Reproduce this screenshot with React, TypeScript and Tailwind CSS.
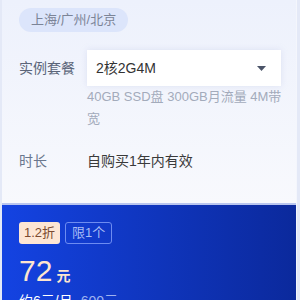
import { useState } from "react";

const plans = ["2核2G4M", "2核4G6M", "4核8G10M"];

export default function App() {
  const [plan] = useState(plans[0]);

  return (
    <div
      className="h-[300px] w-[300px] overflow-hidden bg-[#e4e9f7] pl-[2px] pr-[3px]"
      style={{ fontFamily: '"Liberation Sans", "Noto Sans CJK SC", sans-serif' }}
    >
      <div className="flex h-full flex-col border-r border-[#f4f6fc]">
        {/* config section */}
        <div className="flex h-[203px] shrink-0 flex-col bg-gradient-to-b from-[#edf1fc] to-[#f8f9fd] pl-[17px] pr-[15px] pt-[8px]">
          <div className="flex">
            <span className="rounded-full bg-[#dce5fb] px-[12px] text-[13px] leading-[24px] text-[#7b8497]">
              上海/广州/北京
            </span>
          </div>

          <div className="mt-[18px] flex items-center">
            <span className="w-[68px] text-[14px] text-[#5b6579]">实例套餐</span>
            <div className="flex h-[36px] flex-1 items-center justify-between bg-white pl-[9px] pr-[15px] shadow-[0_0_6px_rgba(180,190,225,0.35)]">
              <span className="text-[14px] text-[#333]">{plan}</span>
              <svg width="9" height="5" viewBox="0 0 9 5">
                <path d="M0 0h9L4.5 5z" fill="#4b5468" />
              </svg>
            </div>
          </div>

          <p className="ml-[68px] w-[200px] break-all text-[13px] leading-[22px] text-[#a3abbb]">
            40GB SSD盘 300GB月流量 4M带宽
          </p>

          <div className="mt-[21px] flex items-center leading-[20px]">
            <span className="w-[68px] text-[14px] text-[#6b778d]">时长</span>
            <span className="text-[14px] text-[#3a3a3a]">自购买1年内有效</span>
          </div>
        </div>

        {/* price section */}
        <div className="h-[2px] shrink-0 bg-[#b9c5ef]" />
        <div className="flex flex-1 flex-col bg-gradient-to-r from-[#1443e2] to-[#0b299c] pl-[17px] pt-[17px]">
          <div className="flex gap-[5px]">
            <span className="rounded-[3px] bg-[#fde6d4] px-[5px] text-[13px] leading-[22px] text-[#7b4a31]">
              1.2折
            </span>
            <span className="rounded-[3px] border border-[#6d8cf1] px-[6px] text-[13px] leading-[20px] text-[#a9bdf6]">
              限1个
            </span>
          </div>
          <div className="mt-[12px] flex items-baseline gap-[4px] text-[#fde5cf]">
            <span className="text-[30px] leading-[30px]">72</span>
            <span className="text-[14px] font-bold">元</span>
          </div>
          <div className="mt-[4px] flex items-baseline gap-[8px] text-[14px] leading-[20px]">
            <span className="text-white">约6元/月</span>
            <span className="text-[#9fb2f0] line-through">600元</span>
          </div>
        </div>
      </div>
    </div>
  );
}
